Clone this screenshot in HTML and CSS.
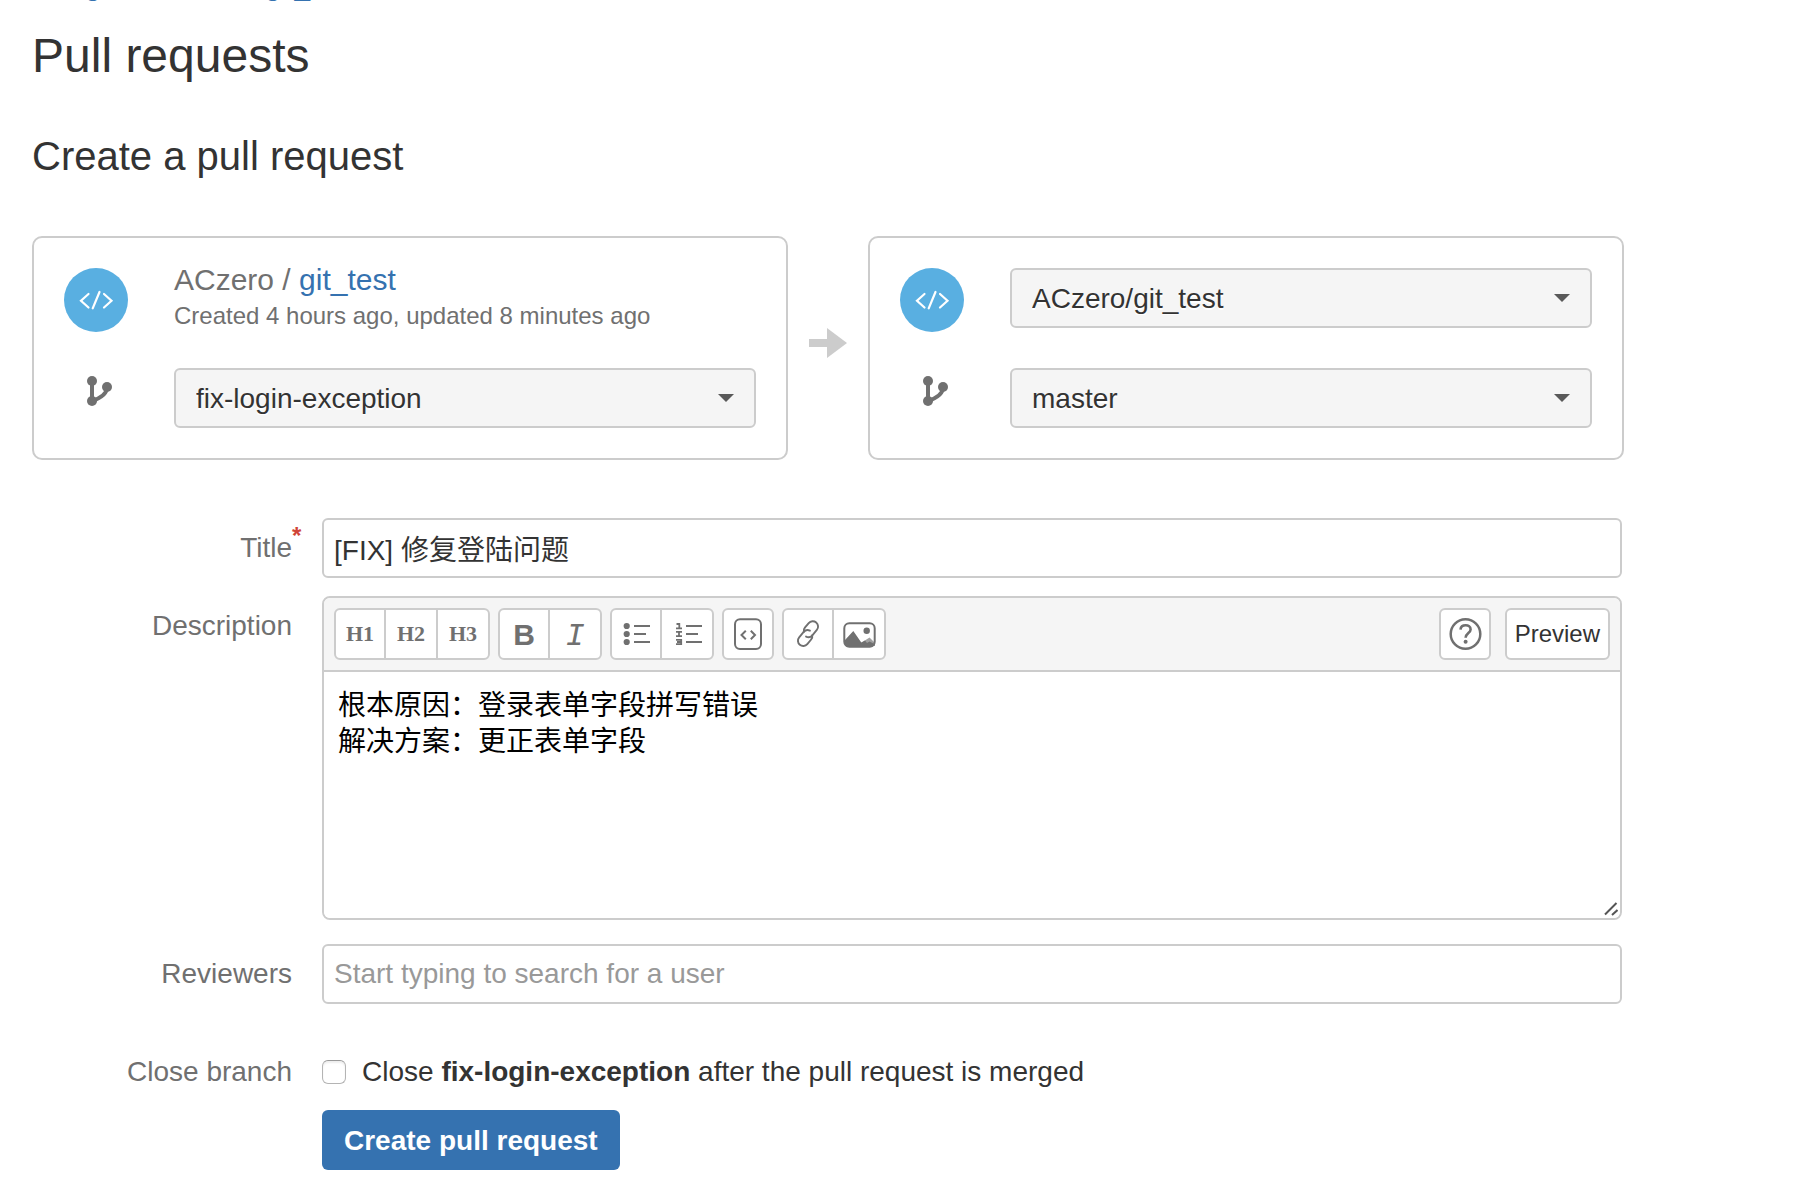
FILE: index.html
```html
<!DOCTYPE html>
<html lang="en">
<head>
<meta charset="utf-8">
<title>Create a pull request</title>
<meta name="viewport" content="width=device-width, initial-scale=1">
<link rel="stylesheet" href="styles.css">
</head>
<body>
<main class="page">
  <nav class="breadcrumbs" aria-label="Breadcrumbs">
    <a href="#">Assign</a><span>/</span><a href="#">ACzero</a><span>/</span><a href="#">git_test</a>
  </nav>
  <h1 class="page-title">Pull requests</h1>
  <h2 class="section-title">Create a pull request</h2>

  <form class="pr-form">
    <div class="branches">
      <section class="branch-card" aria-label="Source">
        <svg class="avatar" viewBox="0 0 64 64" aria-hidden="true">
          <circle cx="32" cy="32" r="32" fill="#59afe1"/>
          <path d="M24.5 26L17 32.7L24.5 39.5M35.5 24L28.7 40.3M40 26L47.5 32.7L40 39.5" fill="none" stroke="#fff" stroke-width="2.2" stroke-linecap="round"/>
        </svg>
        <div class="repo">
          <p class="repo-name">ACzero / <a href="#">git_test</a></p>
          <p class="repo-dates">Created 4 hours ago, updated 8 minutes ago</p>
        </div>
        <svg class="branch-icon" viewBox="0 0 64 60" aria-hidden="true">
          <path d="M28 13V33M28 33Q43 28 43 19" fill="none" stroke="#707070" stroke-width="4"/>
          <g fill="#707070"><circle cx="28" cy="13" r="5"/><circle cx="28" cy="33" r="5"/><circle cx="43" cy="19" r="5"/></g>
        </svg>
        <div class="select">
          <select aria-label="Source branch"><option>fix-login-exception</option><option>master</option></select>
        </div>
      </section>

      <svg class="arrow" viewBox="0 0 38 40" aria-hidden="true"><path d="M0 11H18V0L38 15L18 30V19H0Z" fill="#ccc"/></svg>

      <section class="branch-card" aria-label="Destination">
        <svg class="avatar" viewBox="0 0 64 64" aria-hidden="true">
          <circle cx="32" cy="32" r="32" fill="#59afe1"/>
          <path d="M24.5 26L17 32.7L24.5 39.5M35.5 24L28.7 40.3M40 26L47.5 32.7L40 39.5" fill="none" stroke="#fff" stroke-width="2.2" stroke-linecap="round"/>
        </svg>
        <div class="select">
          <select aria-label="Destination repository"><option>ACzero/git_test</option></select>
        </div>
        <svg class="branch-icon" viewBox="0 0 64 60" aria-hidden="true">
          <path d="M28 13V33M28 33Q43 28 43 19" fill="none" stroke="#707070" stroke-width="4"/>
          <g fill="#707070"><circle cx="28" cy="13" r="5"/><circle cx="28" cy="33" r="5"/><circle cx="43" cy="19" r="5"/></g>
        </svg>
        <div class="select">
          <select aria-label="Destination branch"><option>master</option></select>
        </div>
      </section>
    </div>

    <div class="field field-title">
      <label class="label" for="title">Title<span class="required">*</span></label>
      <input class="text-input" id="title" type="text" value="[FIX] 修复登陆问题">
    </div>

    <div class="field field-description">
      <label class="label" for="description">Description</label>
      <div class="editor">
        <div class="toolbar">
          <div class="group">
            <button class="tool heading" type="button">H1</button>
            <button class="tool heading" type="button">H2</button>
            <button class="tool heading" type="button">H3</button>
          </div>
          <div class="group">
            <button class="tool bold" type="button" aria-label="Bold">B</button>
            <button class="tool italic" type="button" aria-label="Italic">I</button>
          </div>
          <div class="group">
            <button class="tool" type="button" aria-label="Bulleted list">
              <svg viewBox="0 0 48 48"><g fill="#707070" stroke="none"><circle cx="14.7" cy="16" r="3.1"/><circle cx="14.7" cy="24" r="3.1"/><circle cx="14.7" cy="32" r="3.1"/></g><path d="M22 16H38M22 24H34M22 32H38"/></svg>
            </button>
            <button class="tool" type="button" aria-label="Numbered list">
              <svg viewBox="0 0 48 48"><path d="M23 16H39M23 24H35M23 32H39"/><path stroke-width="1.8" d="M13.5 14H16.3V18M13 18.4H19M13 21.8H19M16 22V26M13 26.2H19M13 29.8H18.2V34.2H13M14 32H18"/></svg>
            </button>
          </div>
          <div class="group">
            <button class="tool" type="button" aria-label="Code">
              <svg viewBox="0 0 48 48"><rect x="11" y="9.3" width="26" height="29.6" rx="5"/><path d="M21.8 20.7L17.5 25L21.8 29.3M26.8 20.7L31 25L26.8 29.3"/></svg>
            </button>
          </div>
          <div class="group">
            <button class="tool" type="button" aria-label="Link">
              <svg viewBox="0 0 48 48"><g transform="translate(24 23.6) rotate(-50)" stroke-width="1.9" stroke-linecap="round"><path d="M-1.5 -4.2Q0 -6.2 2.5 -6.2H8.5a5.3 5.3 0 0 1 0 10.6H1.5a5.3 5.3 0 0 1 -5 -4"/><path d="M1.5 4.2Q0 6.2 -2.5 6.2H-8.5a5.3 5.3 0 0 1 0 -10.6H-1.5a5.3 5.3 0 0 1 5 4"/></g></svg>
            </button>
            <button class="tool" type="button" aria-label="Image">
              <svg viewBox="0 0 48 48"><path d="M26 33L34.5 27.5L40 33V36H26Z" fill="#a0a0a0" stroke="none"/><path d="M10 30L18.3 21L26.3 32.5L30 30.5L32 33L34.5 31.5L39.5 34V35L37 37H12L10 35Z" fill="#707070" stroke="none"/><circle cx="31.7" cy="20.7" r="3.2" fill="#707070" stroke="none"/><rect x="9.3" y="13.2" width="30.4" height="23.6" rx="5"/></svg>
            </button>
          </div>
          <div class="toolbar-end">
            <div class="group">
              <button class="tool" type="button" aria-label="Help">
                <svg viewBox="0 0 48 48"><circle cx="24.5" cy="24" r="14.8" stroke-width="2.5"/><path d="M19.5 19.6C20 13.8 29.6 14 29.6 19.4C29.6 23 24.6 23 24.6 27.8" stroke-width="2.6"/><circle cx="24.6" cy="31.8" r="2" fill="#707070" stroke="none"/></svg>
              </button>
            </div>
            <button class="preview" type="button">Preview</button>
          </div>
        </div>
        <textarea class="editor-text" id="description">根本原因：登录表单字段拼写错误
解决方案：更正表单字段</textarea>
        <svg class="grip" viewBox="0 0 14 14" aria-hidden="true"><path d="M1 12.5L12.5 1M8 13L13.5 8"/></svg>
      </div>
    </div>

    <div class="field field-reviewers">
      <label class="label" for="reviewers">Reviewers</label>
      <input class="text-input" id="reviewers" type="text" placeholder="Start typing to search for a user">
    </div>

    <div class="field field-close">
      <span class="label label-inline">Close branch</span>
      <label class="check"><input type="checkbox"><span>Close <b>fix-login-exception</b> after the pull request is merged</span></label>
    </div>

    <div class="field">
      <button class="submit" type="submit">Create pull request</button>
    </div>
  </form>
</main>
</body>
</html>
```
FILE: styles.css
```css
* {
  box-sizing: border-box;
}

body {
  margin: 0;
  background: #fff;
  color: #333;
  font-family: "Liberation Sans", Arial, "Noto Sans CJK SC", sans-serif;
  font-size: 28px;
  line-height: 32px;
}

a {
  color: #3572b0;
  text-decoration: none;
}

h1,
h2,
p {
  margin: 0;
  font-weight: 400;
}

input,
select,
textarea,
button {
  margin: 0;
  font: inherit;
  color: inherit;
}

.page {
  max-width: 1796px;
  padding: 0 172px 30px 32px;
}

/* The page is scrolled just past the breadcrumbs. */
.breadcrumbs {
  display: flex;
  gap: 10px;
  margin-top: -30px;
}

.page-title {
  margin-top: 26px;
  font-size: 48px;
  line-height: 56px;
}

.section-title {
  margin-top: 48px;
  font-size: 40px;
  line-height: 48px;
}

/* Source and destination */
.branches {
  display: grid;
  grid-template-columns: 1fr 80px 1fr;
  align-items: center;
  margin: 56px 0 58px;
}

.branch-card {
  display: grid;
  grid-template-columns: 64px 1fr;
  grid-template-rows: 72px auto;
  gap: 28px 46px;
  align-items: start;
  padding: 30px;
  border: 2px solid #ccc;
  border-radius: 10px;
}

.avatar {
  width: 64px;
  height: 64px;
}

.branch-icon {
  width: 64px;
  height: 60px;
}

.repo {
  margin-top: -6px;
  color: #707070;
  line-height: 36px;
}

.repo-name {
  font-size: 30px;
}

.repo-dates {
  font-size: 24px;
}

.arrow {
  width: 38px;
  height: 40px;
  justify-self: center;
}

.select {
  position: relative;
}

.select select {
  display: block;
  width: 100%;
  height: 60px;
  padding: 2px 48px 0 20px;
  border: 2px solid #ccc;
  border-radius: 6px;
  background: #f5f5f5;
  text-shadow: 0 2px 0 #fff;
  appearance: none;
}

.select::after {
  content: "";
  position: absolute;
  top: 26px;
  right: 22px;
  border: 8px solid transparent;
  border-top-color: #595959;
  border-bottom-width: 0;
  pointer-events: none;
}

/* Form rows */
.field {
  display: grid;
  grid-template-columns: 260px 1fr;
  column-gap: 30px;
  align-items: start;
  padding-right: 2px;
}

.field-title {
  margin-bottom: 18px;
}

.field-description {
  margin-bottom: 24px;
}

.field-reviewers {
  margin-bottom: 52px;
}

.field-close {
  margin-bottom: 22px;
}

.label {
  position: relative;
  color: #707070;
  line-height: 60px;
  text-align: right;
}

.label-inline {
  line-height: 32px;
}

.required {
  position: absolute;
  top: 0;
  left: 100%;
  color: #d04437;
  font-size: 24px;
  font-weight: 700;
  line-height: 36px;
}

.text-input {
  width: 100%;
  height: 60px;
  padding: 0 10px;
  border: 2px solid #ccc;
  border-radius: 6px;
  background: #fff;
}

.text-input::placeholder {
  color: #999;
}

/* Description editor */
.editor {
  position: relative;
  border: 2px solid #ccc;
  border-radius: 8px;
  overflow: hidden;
}

.toolbar {
  display: flex;
  gap: 8px;
  padding: 10px;
  border-bottom: 2px solid #ccc;
  background: #f5f5f5;
}

.group {
  display: flex;
  border: 2px solid #ccc;
  border-radius: 6px;
  background: #fff;
  overflow: hidden;
}

.tool {
  display: flex;
  align-items: center;
  justify-content: center;
  width: 48px;
  height: 48px;
  padding: 0;
  border: 0;
  background: none;
  color: #707070;
}

.tool + .tool {
  width: 52px;
  border-left: 2px solid #ccc;
}

.tool svg {
  width: 48px;
  height: 48px;
  fill: none;
  stroke: #707070;
  stroke-width: 2;
}

.heading {
  font-family: "Liberation Serif", "Times New Roman", serif;
  font-size: 22px;
  font-weight: 700;
}

.bold {
  padding-top: 2px;
  font-size: 30px;
  font-weight: 700;
}

.italic {
  padding-top: 6px;
  font-family: "Liberation Mono", "Courier New", monospace;
  font-size: 32px;
  font-style: italic;
}

.toolbar-end {
  display: flex;
  gap: 14px;
  margin-left: auto;
}

.preview {
  padding: 0 8px;
  border: 2px solid #ccc;
  border-radius: 6px;
  background: #fff;
  font-size: 24px;
}

.editor-text {
  display: block;
  width: 100%;
  height: 246px;
  padding: 16px 14px;
  border: 0;
  color: #000;
  line-height: 36px;
  resize: none;
}

.grip {
  position: absolute;
  right: 2px;
  bottom: 2px;
  width: 14px;
  height: 14px;
  fill: none;
  stroke: #555;
  stroke-width: 2;
}

.check {
  display: flex;
  align-items: center;
  gap: 16px;
}

.check input {
  width: 24px;
  height: 24px;
  border: 1px solid #b4b4b4;
  border-top-color: #999;
  border-radius: 6px;
  background: #fff;
  box-shadow: inset 0 2px 2px #eee;
  appearance: none;
}

.submit {
  grid-column: 2;
  justify-self: start;
  height: 60px;
  padding: 2px 22px 0;
  border: 0;
  border-radius: 6px;
  background: #3572b0;
  color: #fff;
  font-weight: 700;
}
```
